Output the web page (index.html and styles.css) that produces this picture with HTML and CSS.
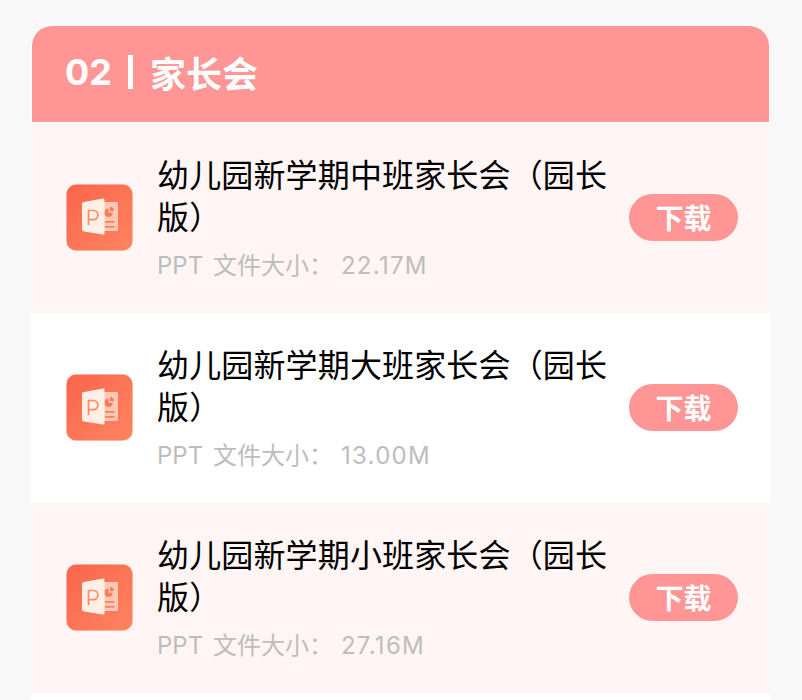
FILE: index.html
```html
<!DOCTYPE html>
<html lang="zh">
<head>
<meta charset="utf-8">
<title>家长会</title>
<link rel="stylesheet" href="styles.css">
</head>
<body>
<svg class="defs" width="0" height="0" aria-hidden="true">
  <defs>
    <linearGradient id="tile" x1="0" y1="0" x2="1" y2="1">
      <stop offset="0" stop-color="#f9654c"/>
      <stop offset="1" stop-color="#ff8461"/>
    </linearGradient>
    <symbol id="ppt" viewBox="0 0 67 67">
      <rect x="0.25" y="0.25" width="66.500" height="66.500" rx="10" fill="url(#tile)" stroke="#ffd9cf" stroke-width="0.500"/>
      <path d="M36 18h15a1 1 0 0 1 1 1v27a1 1 0 0 1-1 1H36z" fill="#ffc8b4"/>
      <path d="M42.500 24.500a4.300 4.300 0 1 0 4.300 4.300h-4.300z" fill="#fa7c5a"/>
      <path d="M44 23a4 4 0 0 1 4 4h-4z" fill="#fa7c5a"/>
      <rect x="39" y="37" width="9.500" height="1.700" fill="#fa7c5a"/>
      <rect x="39" y="42" width="9.500" height="1.700" fill="#fa7c5a"/>
      <path d="M18 18 37 14.500c1 0 1.500.6 1.500 1.500v33c0 1-.5 1.500-1.500 1.500L18 47.500c-1.300-.2-2-1-2-2V20c0-1 .7-1.800 2-2z" fill="#ffefe5"/>
      <path d="M22.500 41V26.500h4.800a4.500 4.500 0 0 1 0 9.200H22.500" fill="none" stroke="#f98a66" stroke-width="1.700"/>
    </symbol>
  </defs>
</svg>
<main class="card">
  <header class="card-head">
    <span class="num">02</span><span class="sep"></span><span class="head-title">家长会</span>
  </header>
  <article class="row pink">
    <svg class="icon"><use href="#ppt"/></svg>
    <div class="info">
      <h3 class="name">幼儿园新学期中班家长会（园长版）</h3>
      <p class="meta">PPT 文件大小<span class="colon">：</span><span class="size">22.17M</span></p>
    </div>
    <a class="btn">下载</a>
  </article>
  <article class="row">
    <svg class="icon"><use href="#ppt"/></svg>
    <div class="info">
      <h3 class="name">幼儿园新学期大班家长会（园长版）</h3>
      <p class="meta">PPT 文件大小<span class="colon">：</span><span class="size">13.00M</span></p>
    </div>
    <a class="btn">下载</a>
  </article>
  <article class="row pink">
    <svg class="icon"><use href="#ppt"/></svg>
    <div class="info">
      <h3 class="name">幼儿园新学期小班家长会（园长版）</h3>
      <p class="meta">PPT 文件大小<span class="colon">：</span><span class="size">27.16M</span></p>
    </div>
    <a class="btn">下载</a>
  </article>
  <div class="row"></div>
</main>
</body>
</html>
```

FILE: styles.css
```css
html, body {
  margin: 0;
  padding: 0;
  height: 700px;
  overflow: hidden;
  background: #f8f8f8;
}
body {
  padding: 25px 32px 0 31px;
  box-sizing: border-box;
  font-family: "Inter", "Noto Sans CJK SC", "Liberation Sans", sans-serif;
}
.defs {
  position: absolute;
}
.card {
  background: #fff;
  border-radius: 22px 22px 0 0;
  padding: 1px 1px 0;
}
.card-head {
  height: 96px;
  box-sizing: border-box;
  padding: 0 0 4px 33px;
  background: #ff9595;
  border-radius: 20px 20px 0 0;
  display: flex;
  align-items: center;
  color: #fff;
  font-weight: 700;
  font-size: 36px;
}
.sep {
  width: 5px;
  height: 34px;
  background: #fff;
  margin: 0 17px 0 16px;
}
.row {
  height: 190px;
  margin: 0 -1px;
  padding: 0 32px 0 35px;
  display: flex;
  align-items: center;
  box-sizing: border-box;
}
.row:first-of-type {
  margin-top: 0.5px;
}
.pink {
  background: #fff5f4;
}
.icon {
  width: 67px;
  height: 67px;
  flex: none;
  margin-right: 24px;
}
.info {
  width: 460px;
  flex: none;
}
.name {
  margin: 0;
  font-family: "Noto Sans CJK SC", sans-serif;
  font-weight: 400;
  font-size: 32px;
  letter-spacing: 0.15px;
  line-height: 42px;
  color: #000;
}
.meta {
  margin: 11px 0 0;
  font-size: 24px;
  line-height: 34px;
  word-spacing: 3px;
  color: #bdbdbd;
}
.colon {
  font-family: "Noto Sans CJK TC", sans-serif;
}
.size {
  margin-left: 8px;
  letter-spacing: 1.300px;
}
.btn {
  margin-left: auto;
  margin-bottom: 1px;
  width: 109px;
  height: 47px;
  border-radius: 24px;
  background: #ff9595;
  color: #fff;
  font-weight: 700;
  font-size: 28px;
  display: flex;
  align-items: center;
  justify-content: center;
}
```
